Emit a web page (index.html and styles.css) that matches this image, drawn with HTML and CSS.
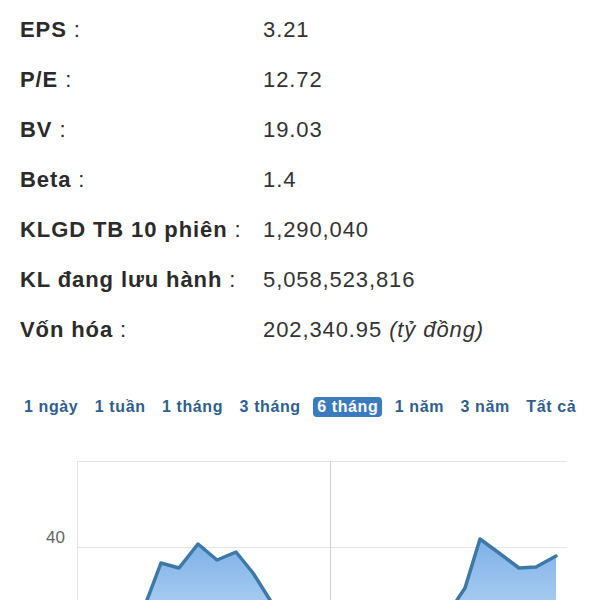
FILE: index.html
```html
<!DOCTYPE html>
<html lang="vi">
  <head>
    <meta charset="UTF-8" />
    <title>Thông tin cổ phiếu</title>
    <link rel="stylesheet" href="styles.css">
  </head>
  <body>
    <div class="info">
      <div class="row"><span class="label"><b>EPS</b> :</span><span class="value">3.21</span></div>
      <div class="row"><span class="label"><b>P/E</b> :</span><span class="value">12.72</span></div>
      <div class="row"><span class="label"><b>BV</b> :</span><span class="value">19.03</span></div>
      <div class="row"><span class="label"><b>Beta</b> :</span><span class="value">1.4</span></div>
      <div class="row"><span class="label"><b>KLGD TB 10 phiên</b> :</span><span class="value">1,290,040</span></div>
      <div class="row"><span class="label"><b>KL đang lưu hành</b> :</span><span class="value">5,058,523,816</span></div>
      <div class="row"><span class="label"><b>Vốn hóa</b> :</span><span class="value">202,340.95 <i>(tỷ đồng)</i></span></div>
    </div>

    <div class="ranges">
      <span class="range">1 ngày</span>
      <span class="range">1 tuần</span>
      <span class="range">1 tháng</span>
      <span class="range">3 tháng</span>
      <span class="range active">6 tháng</span>
      <span class="range">1 năm</span>
      <span class="range">3 năm</span>
      <span class="range">Tất cả</span>
    </div>

    <svg class="chart" width="600" height="160" viewBox="0 440 600 160">
      <defs>
        <linearGradient id="areaFill" x1="0" y1="0" x2="0" y2="1">
          <stop offset="0" stop-color="#7eb1e8" />
          <stop offset="1" stop-color="#a9cdf1" />
        </linearGradient>
      </defs>
      <!-- grid -->
      <line x1="77" y1="461.5" x2="567" y2="461.5" stroke="#e3e3e3" />
      <line x1="77" y1="547.5" x2="567" y2="547.5" stroke="#e3e3e3" />
      <line x1="77.5" y1="461" x2="77.5" y2="600" stroke="#e3e3e3" />
      <line x1="330.5" y1="461" x2="330.5" y2="600" stroke="#cfcfcf" />
      <text x="65" y="543" text-anchor="end" class="axis">40</text>

      <!-- series -->
      <path d="M144 608 L147 600 L161 563 L179 568 L198 544 L217 560 L236 552 L253 573 L270 600 L274 608 Z" fill="url(#areaFill)" />
      <path d="M144 608 L147 600 L161 563 L179 568 L198 544 L217 560 L236 552 L253 573 L270 600 L274 608" fill="none" stroke="#3d78a6" stroke-width="3.5" stroke-linejoin="round" />
      <path d="M453 608 L457 600 L465 588 L480 539 L499 553 L519 568 L536 567 L556 556 L556 608 Z" fill="url(#areaFill)" />
      <path d="M453 608 L457 600 L465 588 L480 539 L499 553 L519 568 L536 567 L556 556" fill="none" stroke="#3d78a6" stroke-width="3.5" stroke-linejoin="round" stroke-linecap="round" />
    </svg>
  </body>
</html>
```

FILE: styles.css
```css
* {
  box-sizing: border-box;
}
body {
  margin: 0;
  font-family: "Liberation Sans", Arial, sans-serif;
  color: #333;
  background: #fff;
  overflow: hidden;
}
.info {
  padding: 5px 20px 0;
}
.row {
  display: grid;
  grid-template-columns: 243px auto;
  font-size: 22px;
  line-height: 50px;
  letter-spacing: 0.9px;
}
.label {
  color: #2b2b2b;
}
.label b {
  font-weight: bold;
}
.value {
  color: #333;
}
.ranges {
  display: flex;
  gap: 8.5px;
  margin-top: 42px;
  padding-left: 20px;
}
.range {
  padding: 1px 4px;
  font-size: 16px;
  line-height: 18px;
  font-weight: bold;
  letter-spacing: 0.6px;
  color: #2f5e8e;
  border-radius: 4px;
}
.range.active {
  background: #3a7bbd;
  color: #fff;
}
.chart {
  display: block;
  margin-top: 23px;
}
.axis {
  font-family: "Liberation Sans", Arial, sans-serif;
  font-size: 17px;
  fill: #666;
}
```
